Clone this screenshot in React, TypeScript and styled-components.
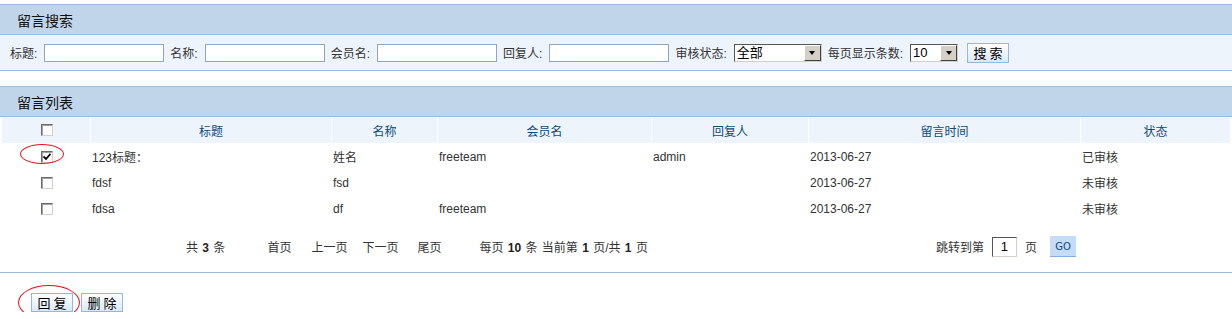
import React from 'react';
import styled, { createGlobalStyle } from 'styled-components';

const GlobalStyle = createGlobalStyle`
  html, body {
    margin: 0;
    padding: 0;
    background: #fff;
  }
  body {
    font-family: "Liberation Sans", "Noto Sans CJK SC", sans-serif;
    font-size: 12px;
    color: #333;
  }
`;

const Page = styled.div`
  width: 1232px;
  padding-top: 4px;
`;

const Panel = styled.section<{ gap?: number }>`
  margin-top: ${(p) => p.gap || 0}px;
  border-top: 1px solid #9bbbdb;
`;

const PanelHead = styled.div`
  height: 29px;
  display: flex;
  align-items: center;
  padding-left: 17px;
  background: #c0d5e9;
  border-bottom: 1px solid #9bbbdb;
  font-size: 14px;
  color: #111;
`;

const SearchBar = styled.form`
  height: 35px;
  display: flex;
  align-items: center;
  padding-left: 10px;
  background: #eef4fc;
  border-bottom: 1px solid #9bbbdb;
`;

const Label = styled.label`
  margin-right: 7px;
  color: #333;
  white-space: nowrap;
`;

const TextInput = styled.input`
  box-sizing: border-box;
  width: 120px;
  height: 18px;
  margin: 0 6px 0 0;
  padding: 0 2px;
  border: 1px solid #8ea6bf;
  background: #fff;
  font-size: 12px;
`;

const FakeSelect = styled.span<{ w: number }>`
  box-sizing: border-box;
  display: inline-flex;
  align-items: stretch;
  width: ${(p) => p.w}px;
  height: 18px;
  margin-right: 6px;
  border: 1px solid;
  border-color: #555 #d4d0c8 #d4d0c8 #555;
  background: #fff;
  font-size: 13px;
  color: #000;
`;

const SelectValue = styled.span`
  flex: 1;
  display: flex;
  align-items: center;
  padding-left: 2px;
  line-height: 1;
`;

const SelectArrow = styled.span`
  width: 15px;
  display: flex;
  align-items: center;
  justify-content: center;
  background: #d4d0c8;
  border: 1px solid;
  border-color: #fff #404040 #404040 #fff;
  &::after {
    content: '';
    border-left: 3.5px solid transparent;
    border-right: 3.5px solid transparent;
    border-top: 4px solid #000;
  }
`;

const PlainButton = styled.button<{ narrow?: boolean }>`
  box-sizing: border-box;
  height: ${(p) => (p.narrow ? 19 : 20)}px;
  width: 42px;
  padding: 0;
  margin-left: ${(p) => (p.narrow ? 0 : 3)}px;
  border: 1px solid #95b7da;
  background: linear-gradient(#ffffff, #dbe8f7);
  font-family: "Noto Sans CJK SC", sans-serif;
  font-size: 13px;
  line-height: 1;
  letter-spacing: 3px;
  text-indent: 3px;
  color: #000;
  cursor: pointer;
`;

const Grid = styled.div`
  display: grid;
  grid-template-columns: 88px 240px 105px 213px 156px 271px 1fr;
  column-gap: 1px;
  padding: 0 2px 0 2px;
`;

const HeadCell = styled.div`
  height: 26px;
  display: flex;
  align-items: center;
  justify-content: center;
  background: #eef4fc;
  color: #0d4b7d;
`;

const Cell = styled.div<{ center?: boolean }>`
  height: 26px;
  display: flex;
  align-items: center;
  justify-content: ${(p) => (p.center ? 'center' : 'flex-start')};
  padding-left: ${(p) => (p.center ? 0 : 1)}px;
  padding-top: 1px;
  box-sizing: border-box;
  position: relative;
  white-space: nowrap;
`;

const Box = styled.span`
  box-sizing: border-box;
  width: 12px;
  height: 12px;
  display: inline-flex;
  align-items: center;
  justify-content: center;
  border: 1px solid;
  border-color: #6b6b6b #d4d0c8 #d4d0c8 #6b6b6b;
  box-shadow: inset 1px 1px 0 #a0a0a0;
  background: #fff;
  margin-left: 2px;
`;

const Ring = styled.span<{ w: number; h: number; x: number; y: number }>`
  position: absolute;
  left: ${(p) => p.x}px;
  top: ${(p) => p.y}px;
  width: ${(p) => p.w}px;
  height: ${(p) => p.h}px;
  border: 1px solid #e8101c;
  border-radius: 50%;
  pointer-events: none;
`;

const Pager = styled.div`
  height: 51px;
  display: flex;
  align-items: center;
  padding: 0 156px 0 186px;
  border-bottom: 1px solid #9bbbdb;
`;

const PagerItem = styled.span<{ gap?: number }>`
  margin-left: ${(p) => p.gap || 0}px;
  white-space: nowrap;
  word-spacing: 1px;
  b {
    font-weight: bold;
    color: #222;
  }
`;

const JumpGroup = styled.div`
  margin-left: auto;
  display: flex;
  align-items: center;
`;

const PageInput = styled.input`
  box-sizing: border-box;
  width: 25px;
  height: 20px;
  margin: 0 8px;
  padding: 0;
  text-align: center;
  border: 1px solid;
  border-color: #555 #d4d0c8 #d4d0c8 #555;
  font-size: 13px;
  color: #000;
`;

const GoButton = styled.button`
  box-sizing: border-box;
  width: 26px;
  height: 21px;
  margin-left: 13px;
  padding: 0;
  border: none;
  border-bottom: 1px solid #80b0e8;
  background: #c4dcf8;
  color: #0d4b7d;
  font-family: "DejaVu Sans", sans-serif;
  font-size: 10px;
`;

const Actions = styled.div`
  position: relative;
  display: flex;
  gap: 8px;
  padding: 20px 0 0 31px;
`;

interface Row {
  title: string;
  name: string;
  member: string;
  reply: string;
  time: string;
  status: string;
  checked?: boolean;
}

const rows: Row[] = [
  { title: '123标题：', name: '姓名', member: 'freeteam', reply: 'admin', time: '2013-06-27', status: '已审核', checked: true },
  { title: 'fdsf', name: 'fsd', member: '', reply: '', time: '2013-06-27', status: '未审核' },
  { title: 'fdsa', name: 'df', member: 'freeteam', reply: '', time: '2013-06-27', status: '未审核' }
];

const heads = ['标题', '名称', '会员名', '回复人', '留言时间', '状态'];

function Check ({ checked }: { checked?: boolean }) {
  return (
    <Box>
      {checked && (
        <svg width='8' height='7' viewBox='0 0 8 7'>
          <path d='M0.5 3.5 L3 6 L7.5 0.8' stroke='#000' strokeWidth='1.8' fill='none' />
        </svg>
      )}
    </Box>
  );
}

export default function App () {
  return (
    <Page>
      <GlobalStyle />
      <Panel>
        <PanelHead>留言搜索</PanelHead>
        <SearchBar onSubmit={(e) => e.preventDefault()}>
          <Label>标题:</Label>
          <TextInput />
          <Label>名称:</Label>
          <TextInput />
          <Label>会员名:</Label>
          <TextInput />
          <Label>回复人:</Label>
          <TextInput />
          <Label>审核状态:</Label>
          <FakeSelect w={88}>
            <SelectValue>全部</SelectValue>
            <SelectArrow />
          </FakeSelect>
          <Label>每页显示条数:</Label>
          <FakeSelect w={48}>
            <SelectValue>10</SelectValue>
            <SelectArrow />
          </FakeSelect>
          <PlainButton type='submit'>搜索</PlainButton>
        </SearchBar>
      </Panel>

      <Panel gap={15}>
        <PanelHead>留言列表</PanelHead>
        <Grid>
          <HeadCell><Check /></HeadCell>
          {heads.map((h) => <HeadCell key={h}>{h}</HeadCell>)}
          {rows.map((r, i) => (
            <React.Fragment key={i}>
              <Cell center>
                <Check checked={r.checked} />
                {r.checked && <Ring x={18} y={1} w={42} h={18} />}
              </Cell>
              <Cell>{r.title}</Cell>
              <Cell>{r.name}</Cell>
              <Cell>{r.member}</Cell>
              <Cell>{r.reply}</Cell>
              <Cell>{r.time}</Cell>
              <Cell>{r.status}</Cell>
            </React.Fragment>
          ))}
        </Grid>
        <Pager>
          <PagerItem>共 <b>3</b> 条</PagerItem>
          <PagerItem gap={42}>首页</PagerItem>
          <PagerItem gap={20}>上一页</PagerItem>
          <PagerItem gap={15}>下一页</PagerItem>
          <PagerItem gap={19}>尾页</PagerItem>
          <PagerItem gap={38}>每页 <b>10</b> 条 当前第 <b>1</b> 页/共 <b>1</b> 页</PagerItem>
          <JumpGroup>
            <PagerItem>跳转到第</PagerItem>
            <PageInput defaultValue='1' />
            <PagerItem>页</PagerItem>
            <GoButton>GO</GoButton>
          </JumpGroup>
        </Pager>
      </Panel>

      <Actions>
        <PlainButton narrow>回复</PlainButton>
        <PlainButton narrow>删除</PlainButton>
        <Ring x={18} y={12} w={60} h={33} />
      </Actions>
    </Page>
  );
}
